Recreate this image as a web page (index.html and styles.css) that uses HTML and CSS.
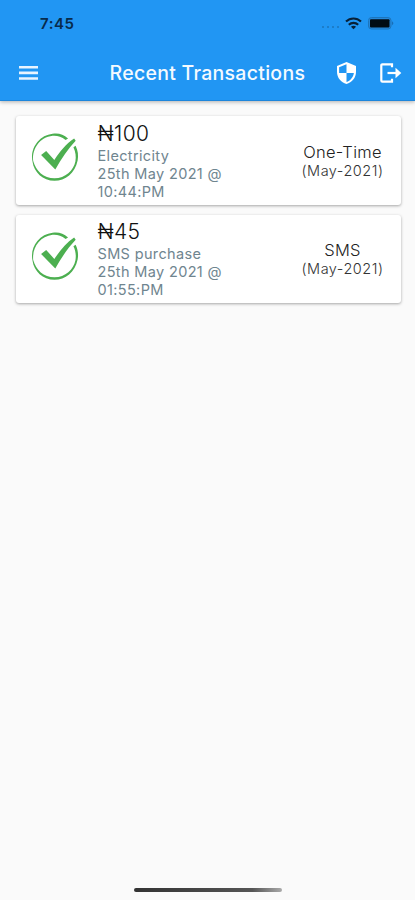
FILE: index.html
```
<!DOCTYPE html>
<html lang="en">
<head>
<meta charset="utf-8">
<title>Recent Transactions</title>
<link rel="stylesheet" href="styles.css">
</head>
<body>
<svg class="defs" width="0" height="0" aria-hidden="true">
  <symbol id="check" viewBox="0 0 50 52">
    <path d="M22 1.800C28 .8 33 2.300 37.800 6.700L35.300 8.200C31 4.700 27 3.600 22 3.900C9 5.500 1.200 17 2.200 29L1.500 30C0 22 2 16 6.500 10.200C10.500 5.300 16 2.500 22 1.800Z"/>
    <path d="M43.300 15.500L45.500 14C48 19 48.500 24 47.600 29C45 42 35 49.800 24 49.800C12 49.500 3 41 1.500 30L2.100 29C5 40 13 47 24 47.200C35 47.200 43.500 39 45.300 30C46.200 25 45.500 20 43.300 15.500Z"/>
    <path d="M10.300 23.500L15.500 19.300L23.800 28.500C29.500 20 36 12 44 6.700L45.600 9C38 17 31 27 24.800 38.300Z"/>
  </symbol>
</svg>
<header class="top">
  <div class="status">
    <span class="time">7:45</span>
    <div class="indicators">
      <span class="signal"><i></i><i></i><i></i><i></i></span>
      <svg class="wifi" viewBox="0 0 17 13"><g fill="none" stroke="#082037" stroke-width="2.100"><path d="M1 4.600C5.300.4 11.700.4 16 4.600"/><path d="M3.800 7.700C6.500 5.200 10.500 5.200 13.200 7.700"/></g><path fill="#082037" d="M8.500 12.200L5.900 9.700Q8.500 7.800 11.100 9.700Z"/></svg>
      <svg class="battery" viewBox="0 0 27 13"><rect x=".5" y=".5" width="22.500" height="11.500" rx="3" fill="#2588d9" stroke="#1c75bc"/><rect x="2" y="2.200" width="19.500" height="8.200" rx="1" fill="#000b14"/><path d="M24.200 4.200Q26.400 6.200 24.200 8.300Z" fill="#1766a8"/></svg>
    </div>
  </div>
  <div class="bar">
    <svg class="menu" viewBox="0 0 19 14" fill="#e8f4ff"><path d="M0 0H19V2.600H0ZM0 5.600H19V8.200H0ZM0 11.200H19V13.800H0Z"/></svg>
    <h1>Recent Transactions</h1>
    <svg class="shield" viewBox="3 1 18 22" preserveAspectRatio="none"><path fill="#fff" d="M12 1L3 5V11C3 16.550 6.840 21.740 12 23C17.160 21.740 21 16.550 21 11V5ZM12 11.990H19C18.470 16.110 15.720 19.780 12 20.930V12H5V6.300L12 3.190Z"/></svg>
    <svg class="logout" viewBox="0 0 22 20" fill="none" stroke="#fff" stroke-width="2.200"><path d="M12 4.200V1.300H2.400Q1.300 1.300 1.300 2.400V17.600Q1.300 18.700 2.400 18.700H12V15.800"/><path d="M7.500 10H19"/><path fill="#fff" stroke="none" d="M15.500 4.800L21.300 10L15.500 15.200Z"/></svg>
  </div>
</header>
<main class="list">
  <article class="card">
    <svg class="check"><use href="#check"/></svg>
    <div class="details">
      <h2>₦100</h2>
      <p>Electricity</p>
      <p>25th May 2021 @</p>
      <p>10:44:PM</p>
    </div>
    <div class="plan"><strong>One-Time</strong><span>(May-2021)</span></div>
  </article>
  <article class="card">
    <svg class="check"><use href="#check"/></svg>
    <div class="details">
      <h2>₦45</h2>
      <p>SMS purchase</p>
      <p>25th May 2021 @</p>
      <p>01:55:PM</p>
    </div>
    <div class="plan"><strong>SMS</strong><span>(May-2021)</span></div>
  </article>
</main>
<div class="home"></div>
</body>
</html>
```
FILE: styles.css
```
* { box-sizing: border-box; }
body {
  margin: 0;
  height: 900px;
  display: flex;
  flex-direction: column;
  background: #fafafa;
  font-family: Inter, "Liberation Sans", sans-serif;
  overflow: hidden;
}
h1, h2, p { margin: 0; font-weight: 400; }
svg { display: block; flex: none; }
.defs { position: absolute; }
.top {
  height: 101px;
  flex: none;
  background: #2196f3;
  border-bottom: 1px solid #1d86dc;
  box-shadow: 0 1px 4px rgba(0, 0, 0, .3);
}
.status {
  height: 46px;
  padding: 0 20px 0 40px;
  display: flex;
  align-items: center;
  justify-content: space-between;
}
.time { font-size: 15px; font-weight: 600; letter-spacing: .55px; color: #082b4b; }
.indicators { display: flex; align-items: center; }
.signal { display: flex; gap: 2.500px; margin: 8px 6px 0 0; }
.signal i { width: 2.500px; height: 2.500px; border-radius: 50%; background: #1b75bd; }
.wifi { width: 17px; height: 13px; margin-right: 6px; }
.battery { width: 27px; height: 13px; }
.bar {
  height: 54px;
  padding: 0 13px 0 19px;
  display: flex;
  align-items: center;
}
.menu { width: 19px; height: 14px; }
h1 {
  width: 196px;
  margin: 0 32px 0 71.500px;
  font-size: 19.500px;
  font-weight: 550;
  line-height: 24px;
  letter-spacing: .28px;
  white-space: nowrap;
  color: #f4faff;
}
.shield { width: 19px; height: 22px; margin-right: 24px; }
.logout { width: 22px; height: 20px; }
.list {
  flex: 1;
  padding: 15px 14.500px 0 15.500px;
  display: flex;
  flex-direction: column;
  gap: 10px;
}
.card {
  height: 88.500px;
  padding-left: 16px;
  display: flex;
  align-items: flex-start;
  background: #fff;
  border-radius: 3px;
  box-shadow: 0 1px 3px rgba(0, 0, 0, .34);
}
.check { width: 49px; height: 51px; margin: 16px 18px 0 -1px; fill: #4caf50; }
.details {
  width: 190px;
  padding-top: 3.500px;
  color: #6f858f;
  font-size: 14.500px;
  font-weight: 300;
  line-height: 18px;
  letter-spacing: .35px;
  white-space: nowrap;
}
h2 { font-size: 21px; font-weight: 300; line-height: 27px; letter-spacing: .3px; color: #111; }
.plan {
  width: 110px;
  padding-top: 25.500px;
  display: flex;
  flex-direction: column;
  align-items: center;
  color: #333;
}
.plan strong { font-size: 16.500px; font-weight: 300; line-height: 20px; letter-spacing: .3px; color: #222; }
.plan span { font-size: 14.500px; font-weight: 300; line-height: 18px; letter-spacing: .5px; }
.home {
  width: 148px;
  height: 4px;
  margin: 0 0 8px 134px;
  flex: none;
  border-radius: 2px;
  background: linear-gradient(90deg, #333, #555 80%, #aaa);
}
```
